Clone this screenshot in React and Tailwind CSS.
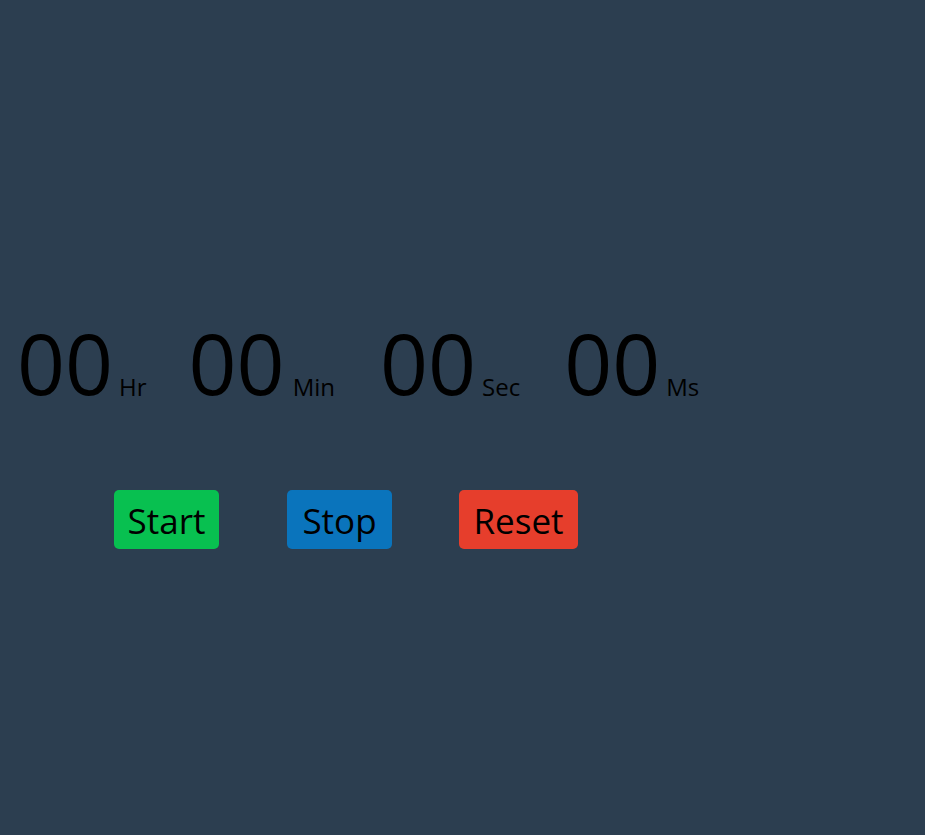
export default function App() {
  const groups = [
    ["00", "Hr", "", "ml-[6px]"],
    ["00", "Min", "pr-[3px]", "ml-[8px]"],
    ["00", "Sec", "pr-[2px]", "ml-[6px]"],
    ["00", "Ms", "", "ml-[6px]"],
  ];
  return (
    <div
      className="min-h-screen w-full bg-[#2c3e50] text-black pt-[321px]"
      style={{ fontFamily: '"Open Sans", "Noto Sans", sans-serif' }}
    >
      <div className="flex pl-[17px] gap-[42px]">
        {groups.map(([n, l, extra, ml]) => (
          <div key={l} className={`flex items-end ${extra}`}>
            <span className="text-[84px] leading-none">{n}</span>
            <span className={`text-[24px] leading-none mb-[6px] ${ml}`}>{l}</span>
          </div>
        ))}
      </div>
      <div className="flex pl-[114px] mt-[85px]">
        <button className="w-[105px] h-[59px] rounded-[5px] bg-[#08c050] text-[35px] pt-[3px] flex items-center justify-center">
          Start
        </button>
        <button className="ml-[68px] w-[105px] h-[59px] rounded-[5px] bg-[#0a74bc] text-[35px] pt-[3px] flex items-center justify-center">
          Stop
        </button>
        <button className="ml-[67px] w-[119px] h-[59px] rounded-[5px] bg-[#e63e2c] text-[35px] pt-[3px] flex items-center justify-center">
          Reset
        </button>
      </div>
    </div>
  );
}
